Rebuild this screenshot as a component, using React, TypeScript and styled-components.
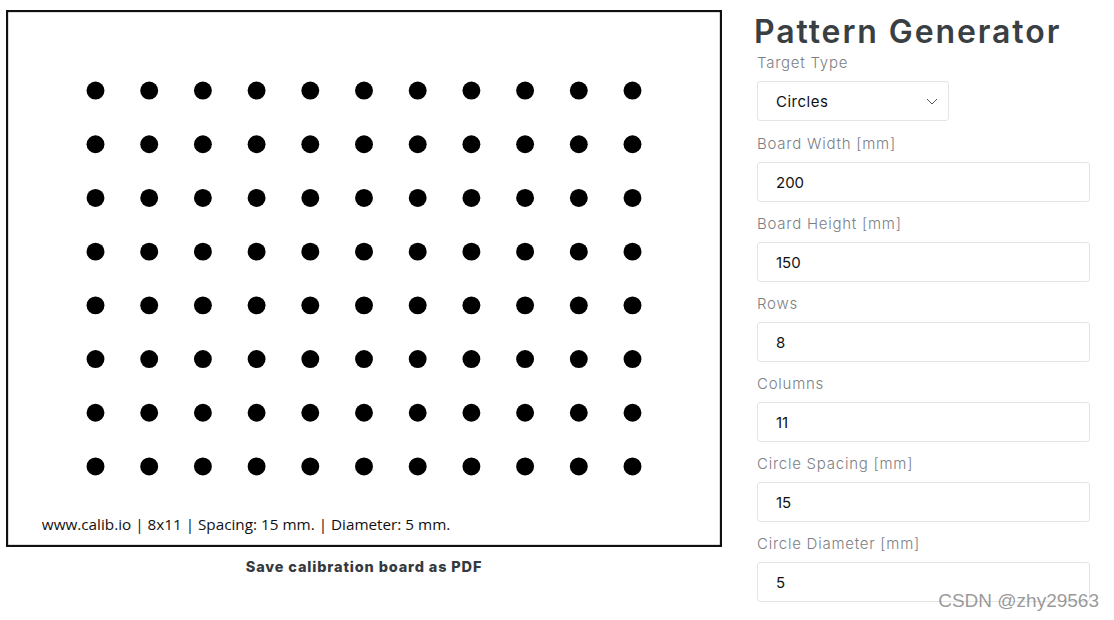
import React from "react";
import styled, { createGlobalStyle } from "styled-components";

const GlobalStyle = createGlobalStyle`
  html, body { margin: 0; padding: 0; background: #ffffff; }
  body { font-family: Inter, "Noto Sans", sans-serif; }
`;

const Page = styled.div`
  display: flex;
  align-items: flex-start;
  gap: 35px;
  padding: 10px 0 0 6px;
  width: 1114px;
  height: 620px;
  box-sizing: border-box;
  position: relative;
  overflow: hidden;
`;

const BoardColumn = styled.div`
  display: flex;
  flex-direction: column;
  align-items: center;
  width: 716px;
`;

const BoardSvg = styled.svg`
  display: block;
  width: 716px;
  height: 537px;
`;

const SaveButton = styled.button`
  margin-top: 10px;
  border: none;
  background: none;
  padding: 0;
  font-family: Inter, "Noto Sans", sans-serif;
  font-weight: 800;
  font-size: 14.5px;
  line-height: 20px;
  letter-spacing: 0.85px;
  color: #343a40;
  cursor: pointer;
`;

const FormColumn = styled.div`
  display: flex;
  flex-direction: column;
  width: 333px;
`;

const Title = styled.h1`
  margin: 2px 0 1px -3px;
  font-family: Inter, "Noto Sans", sans-serif;
  font-weight: 600;
  font-size: 32px;
  line-height: 40px;
  color: #3a3f44;
  letter-spacing: 1.9px;
  white-space: nowrap;
`;

const Fields = styled.div`
  display: flex;
  flex-direction: column;
  gap: 12px;
`;

const Field = styled.div`
  display: flex;
  flex-direction: column;
  gap: 8px;
`;

const Label = styled.label`
  font-family: Inter, "Noto Sans", sans-serif;
  font-weight: 300;
  font-size: 15px;
  line-height: 20px;
  letter-spacing: 0.75px;
  color: #7b8086;
`;

const SelectWrap = styled.div`
  position: relative;
  width: 192px;
  margin-bottom: 1px;
`;

const Select = styled.select`
  appearance: none;
  -webkit-appearance: none;
  width: 100%;
  height: 40px;
  box-sizing: border-box;
  border: 1px solid #e4e4e4;
  border-radius: 3px;
  background: #fff;
  padding: 0 0 0 18px;
  font-family: Inter, "Noto Sans", sans-serif;
  font-size: 15px;
  letter-spacing: 0.5px;
  color: #111;
  outline: none;
`;

const Chevron = styled.svg`
  position: absolute;
  right: 11px;
  top: 17px;
  pointer-events: none;
`;

const Input = styled.input`
  width: 333px;
  height: 40px;
  box-sizing: border-box;
  border: 1px solid #e4e4e4;
  border-radius: 3px;
  background: #fff;
  padding: 0 0 0 18px;
  font-family: Inter, "Noto Sans", sans-serif;
  font-size: 15px;
  color: #111;
  outline: none;
`;

const Watermark = styled.div`
  position: absolute;
  right: 15px;
  bottom: 8px;
  font-family: "Liberation Sans", Arial, sans-serif;
  font-size: 19px;
  color: rgba(120, 120, 120, 0.75);
  pointer-events: none;
`;

const ROWS = 8;
const COLS = 11;
const SPACING = 15;
const DIAM = 5;
const W = 200;
const H = 150;

function Board() {
  const x0 = (W - (COLS - 1) * SPACING) / 2;
  const y0 = (H - (ROWS - 1) * SPACING) / 2;
  const dots: React.ReactNode[] = [];
  for (let r = 0; r < ROWS; r++) {
    for (let c = 0; c < COLS; c++) {
      dots.push(
        <circle key={`${r}-${c}`} cx={x0 + c * SPACING} cy={y0 + r * SPACING} r={DIAM / 2} fill="#000" />
      );
    }
  }
  return (
    <BoardSvg viewBox={`0 0 ${W} ${H}`}>
      <rect x={0} y={0} width={W} height={H} fill="#fff" />
      {dots}
      <text
        x={10}
        y={145.2}
        fontFamily="'Open Sans', 'Noto Sans', sans-serif"
        fontSize={4.27}
        fill="#111"
      >
        www.calib.io | 8x11 | Spacing: 15 mm. | Diameter: 5 mm.
      </text>
      <rect x={0.3} y={0.3} width={W - 0.6} height={H - 0.6} fill="none" stroke="#111" strokeWidth={0.6} />
    </BoardSvg>
  );
}

const fields = [
  { label: "Board Width [mm]", value: "200" },
  { label: "Board Height [mm]", value: "150" },
  { label: "Rows", value: "8" },
  { label: "Columns", value: "11" },
  { label: "Circle Spacing [mm]", value: "15" },
  { label: "Circle Diameter [mm]", value: "5" },
];

export default function App() {
  return (
    <>
      <GlobalStyle />
      <Page>
        <BoardColumn>
          <Board />
          <SaveButton>Save calibration board as PDF</SaveButton>
        </BoardColumn>
        <FormColumn>
          <Title>Pattern Generator</Title>
          <Fields>
            <Field>
              <Label>Target Type</Label>
              <SelectWrap>
                <Select defaultValue="circles">
                  <option value="circles">Circles</option>
                  <option value="checker">Checkerboard</option>
                  <option value="charuco">ChArUco</option>
                </Select>
                <Chevron width="12" height="7" viewBox="0 0 12 7">
                  <polyline points="1,1 6,6 11,1" fill="none" stroke="#555" strokeWidth="1" />
                </Chevron>
              </SelectWrap>
            </Field>
            {fields.map((f) => (
              <Field key={f.label}>
                <Label>{f.label}</Label>
                <Input defaultValue={f.value} />
              </Field>
            ))}
          </Fields>
        </FormColumn>
        <Watermark>CSDN @zhy29563</Watermark>
      </Page>
    </>
  );
}
